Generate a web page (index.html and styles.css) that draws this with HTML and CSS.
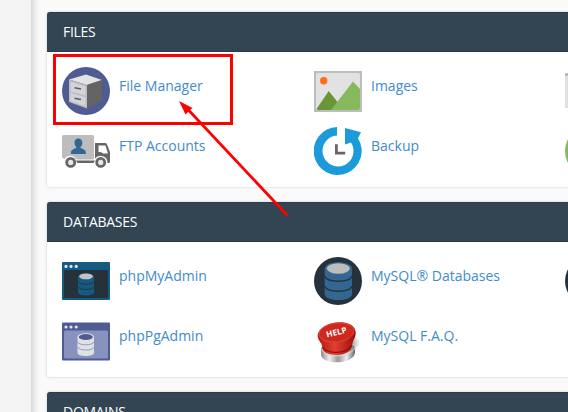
FILE: index.html
```
<!DOCTYPE html>
<html lang="en">
<head>
<meta charset="utf-8">
<title>cPanel</title>
<link rel="stylesheet" href="styles.css">
</head>
<body>
<div class="layout">
  <aside class="sidebar"></aside>
  <main class="content">
    <section class="panel">
      <h2 class="panel-title">FILES</h2>
      <div class="items">
        <a class="item"><svg class="icon" viewBox="0 0 48 48"><circle cx="24" cy="24" r="24" fill="#4f5b93"/><path d="M7 12.500 24 7.500 40 13 25 18z" fill="#e3e3e3"/><path d="M7 12.500 25 18V41.500L7 35z" fill="#bcbcc1"/><path d="M40 13 25 18V41.500L40 33.500z" fill="#646464"/><path d="M8.500 15 23.500 19.500V28.500L8.500 24.500zM8.500 26 23.500 30.500V39L8.500 34z" fill="#d4d4d8"/><path d="M12.500 20.800l6.500 1.300M12.500 31.300l6.500 1.300" fill="none" stroke="#5c5c64" stroke-width="1.500"/></svg><span class="label">File Manager</span></a>
        <a class="item"><svg class="icon" viewBox="0 0 48 48"><rect y="4" width="48" height="41" fill="#bdbdbd"/><rect x="2" y="6" width="44" height="37" rx="2" fill="#e2e2e2"/><circle cx="9.700" cy="13.700" r="3.700" fill="#ff6c1a"/><path d="M2.500 42 14.700 24 26 38V43H4z" fill="#6a9638"/><path d="M17 43 39 14.500 46 22V41q0 2-2 2z" fill="#86b95c"/></svg><span class="label">Images</span></a>
        <a class="item"><svg class="icon" viewBox="0 0 48 48"><rect y="6" width="48" height="35" rx="1" fill="#e0e0e0"/><path d="M0 9V7q0-1 1-1h47v3z" fill="#b8b8b8"/></svg></a>
        <a class="item"><svg class="icon" viewBox="0 0 48 48"><path d="M1.500 8h29q1.500 0 1.500 1.500V31q0 1.500-1.500 1.500H14.500A7 7 0 0 0 2.500 32Q0 31.500 0 30V9.500Q0 8 1.500 8z" fill="#bdbdbd"/><path d="M16.300 11.500c2.500 0 4 1.700 4 4.200 0 2-.8 3.300-1.800 4.300v1c3 1 5.300 2 5.300 4V27H9v-2c0-2 2.300-3 5.300-4v-1c-1-1-1.800-2.300-1.800-4.300 0-2.500 1.300-4.200 3.800-4.200z" fill="#316795"/><path d="M33 16h10q1.500 0 2 1.200L48 25v9.500q0 1.500-1.500 1.500h-1A7 7 0 0 0 33 31.500zM36.500 18.500V25h2l3 1.500H46l-2.600-8z" fill="#666" fill-rule="evenodd"/><path d="M14 33.500h19l-1.500 2.500h-16z" fill="#666"/><circle cx="8.700" cy="35.400" r="4" fill="#e8e8e8" stroke="#666" stroke-width="2.800"/><circle cx="38.700" cy="35.400" r="4" fill="#e8e8e8" stroke="#666" stroke-width="2.800"/></svg><span class="label">FTP Accounts</span></a>
        <a class="item"><svg class="icon" viewBox="0 0 48 48"><path d="M23 0A24 24 0 1 0 44 11.200L47 5.300 31 1V17.500L37 15.500A15.500 15.500 0 1 1 23 8.500z" fill="#1c9bda"/><path d="M22.400 17.300v8.900h8.800" fill="none" stroke="#666" stroke-width="2.800"/></svg><span class="label">Backup</span></a>
        <a class="item"><svg class="icon" viewBox="0 0 48 48"><circle cx="24" cy="24" r="24" fill="#86b95c"/></svg></a>
      </div>
    </section>

    <section class="panel">
      <h2 class="panel-title">DATABASES</h2>
      <div class="items">
        <a class="item"><svg class="icon" viewBox="0 0 48 48"><rect y="5" width="48" height="38" rx="1" fill="#155a80"/><rect x="2" y="13" width="44" height="28" rx="1.500" fill="#25323c"/><g fill="#dce5e9"><circle cx="4" cy="9.400" r="1.600"/><circle cx="9" cy="9.400" r="1.600"/><circle cx="14.200" cy="9.400" r="1.600"/></g><path d="M16 19.500C16 15 32 15 32 19.500V35.500C32 39.500 16 39.500 16 35.500z" fill="#155a80"/><ellipse cx="24" cy="19.400" rx="6.800" ry="2.900" fill="#c3c1c3"/><path d="M16 24.200c1 4 15 4 16 0M16 29.500c1 4 15 4 16 0" fill="none" stroke="#25323c" stroke-width=".9"/></svg><span class="label">phpMyAdmin</span></a>
        <a class="item"><svg class="icon" viewBox="0 0 48 48"><circle cx="24" cy="24" r="24" fill="#25323c"/><path d="M10.700 11.500C10.700 3 38 3 38 11.500V37C38 45 10.700 45 10.700 37z" fill="#336791"/><ellipse cx="24.300" cy="11.500" rx="11.500" ry="5.200" fill="#bdbdbd"/><path d="M10.700 19c2 7 25.300 7 27.300 0M10.700 29c2 7 25.300 7 27.300 0" fill="none" stroke="#25323c" stroke-width="1.300"/></svg><span class="label">MySQL® Databases</span></a>
        <a class="item"><svg class="icon" viewBox="0 0 48 48"><circle cx="24" cy="24" r="24" fill="#25323c"/></svg></a>
        <a class="item"><svg class="icon" viewBox="0 0 48 48"><rect y="5.500" width="48" height="38" rx="1" fill="#4f5b93"/><rect x="2" y="13.500" width="44" height="28" rx="1.500" fill="#8892bf"/><g fill="#e2e2e7"><circle cx="4" cy="10" r="1.600"/><circle cx="9" cy="10" r="1.600"/><circle cx="14.200" cy="10" r="1.600"/></g><path d="M15.500 20C15.500 15 32 15 32 20V36C32 40 15.500 40 15.500 36z" fill="#e1e1e1"/><ellipse cx="23.800" cy="20" rx="7" ry="3" fill="#4f5b93"/><path d="M15.500 24.800c1 4 15.500 4 16.500 0M15.500 30c1 4 15.500 4 16.500 0" fill="none" stroke="#8892bf" stroke-width=".9"/></svg><span class="label">phpPgAdmin</span></a>
        <a class="item"><svg class="icon" viewBox="0 0 48 48"><defs><linearGradient id="metal"><stop stop-color="#8b8b8b"/><stop offset=".25" stop-color="#eee"/><stop offset=".5" stop-color="#999"/><stop offset=".75" stop-color="#eee"/><stop offset="1" stop-color="#666"/></linearGradient><linearGradient id="red"><stop stop-color="#b91a12"/><stop offset=".45" stop-color="#df3f2f"/><stop offset="1" stop-color="#9a100b"/></linearGradient><radialGradient id="shade"><stop stop-color="#999"/><stop offset="1" stop-color="#999" stop-opacity="0"/></radialGradient></defs><ellipse cx="37" cy="26" rx="9" ry="9" fill="url(#shade)"/><path d="M7 32C7 26 41 24 41 31V36C40 47 9 49 7 38z" fill="url(#metal)"/><path d="M8 32C10 43 39 40 41 30" fill="none" stroke="#d9d9d9" stroke-width="1"/><path d="M3.700 19C4 5 38 -1 41.500 14c1 5-1.500 8-2.700 11L37.500 31C34 40 12 40 8.800 32.500L7.500 27C5.500 24 3.700 22 3.700 19z" fill="url(#red)"/><path d="M8.500 30C14 38 33 37 38 28" fill="none" stroke="#951009" stroke-width="1.300"/><ellipse cx="22.500" cy="15.500" rx="17.600" ry="9.500" fill="#cf281e" stroke="#e0493b" stroke-width=".9" transform="rotate(-7 22.500 15.500)"/><text class="help" x="22.600" y="18.200" transform="rotate(-14 22.500 16)">HELP</text></svg><span class="label">MySQL F.A.Q.</span></a>
      </div>
    </section>

    <section class="panel">
      <h2 class="panel-title">DOMAINS</h2>
      <div class="items"></div>
    </section>
  </main>
</div>
<svg class="annotation" viewBox="0 0 568 412"><rect x="54.500" y="55.500" width="177" height="68" fill="none" stroke="#f00" stroke-width="3"/><path d="M188 109.500 286.500 214.500" stroke="#f00" stroke-width="2.800" stroke-linecap="round"/><path d="M179 101 192.500 108 189.500 110.500 185.500 114.500z" fill="#f00"/></svg>
</body>
</html>
```

FILE: styles.css
```
* { box-sizing: border-box; }
body {
  margin: 0;
  width: 568px;
  height: 412px;
  overflow: hidden;
  background: #fafafa;
  font-family: "Open Sans", sans-serif;
}
.layout { display: flex; height: 412px; overflow: hidden; }
.sidebar { flex: 0 0 31px; background: #f4f4f4; }
.content {
  flex: 0 0 800px;
  padding: 12px 0 0 16px;
  background: linear-gradient(90deg, #d9d9d9 0, #e2e2e2 2px, #f2f2f2 5px, #fafafa 9px);
}
.panel {
  height: 175px;
  margin-bottom: 15px;
  border-radius: 3px;
  background: #fff;
  box-shadow: 0 0 2px 1px #e4e4e4;
}
.panel-title {
  height: 40px;
  margin: 0;
  padding-left: 16px;
  border: 1px solid #293a4a;
  border-left-width: 0;
  border-radius: 3px 0 0 0;
  background: #334452;
  color: #fff;
  font-size: 14px;
  font-weight: 400;
  letter-spacing: -0.28px;
  line-height: 38px;
}
.items {
  display: grid;
  grid-template-columns: 252px 251px 252px;
  grid-auto-rows: 48px;
  row-gap: 12px;
  padding: 15px 0 0 15px;
}
.item { display: flex; gap: 9px; color: #428bca; }
.icon { flex: none; width: 48px; height: 48px; }
.label { font-size: 14px; line-height: 20px; padding-top: 9px; white-space: nowrap; }
.help { fill: #fff; font: bold 8.200px "Open Sans", sans-serif; text-anchor: middle; }
.annotation { position: absolute; top: 0; left: 0; width: 568px; height: 412px; pointer-events: none; }
```
